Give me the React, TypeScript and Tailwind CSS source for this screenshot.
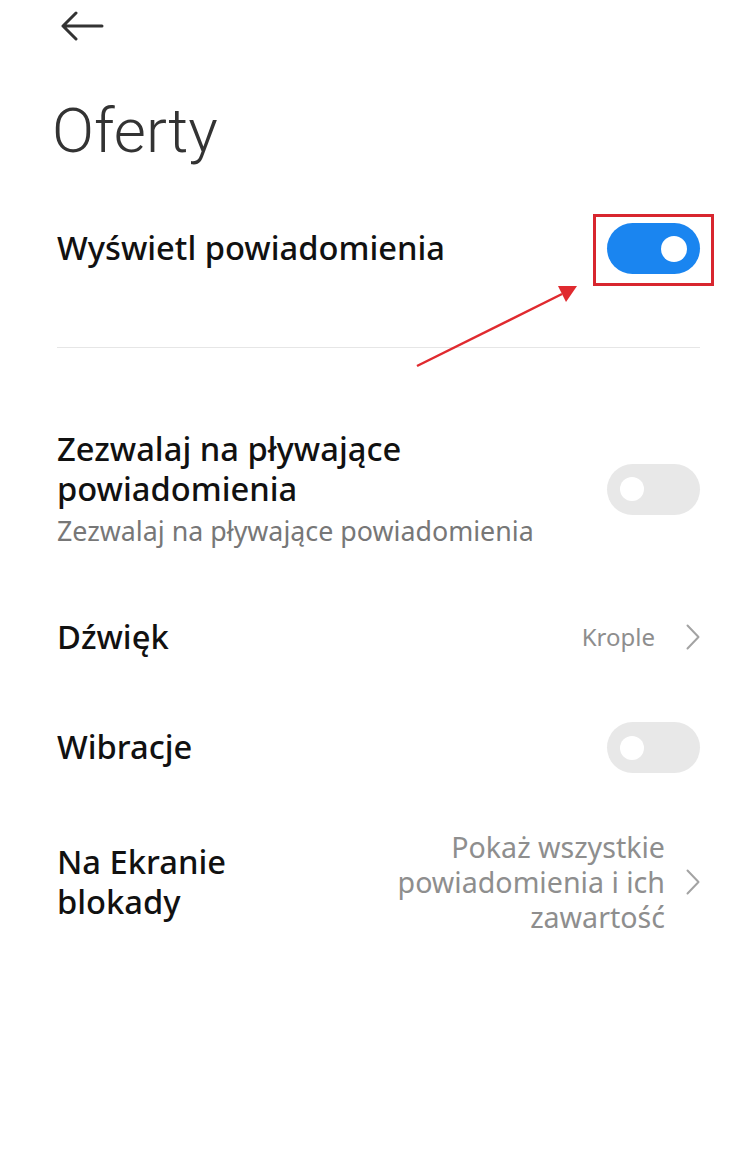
import React from "react";

const FONT = { fontFamily: "'Noto Sans', Roboto, sans-serif" };
const TITLE_FONT = { fontFamily: "Roboto, 'Noto Sans', sans-serif" };

function Toggle({ on }: { on?: boolean }) {
  return (
    <div
      className={`flex h-[51px] w-[93px] shrink-0 items-center rounded-full px-[13px] ${
        on ? "justify-end bg-[#1a85f0]" : "justify-start bg-[#e8e8e8]"
      }`}
    >
      <div className={`rounded-full bg-white ${on ? "h-[26px] w-[26px]" : "h-[24px] w-[24px]"}`} />
    </div>
  );
}

function Chevron() {
  return (
    <svg width="14" height="26" viewBox="0 0 14 26" className="shrink-0">
      <path d="M1.5 1.5 L12.5 13 L1.5 24.5" fill="none" stroke="#a3a3a3" strokeWidth="2" strokeLinecap="round" strokeLinejoin="round" />
    </svg>
  );
}

function Lines({ lines, className }: { lines: string[]; className: string }) {
  return (
    <div>
      {lines.map((l) => (
        <div key={l} className={className}>
          {l}
        </div>
      ))}
    </div>
  );
}

export default function App() {
  return (
    <div className="relative min-h-[1170px] w-[756px] bg-white text-[#111]" style={FONT}>
      <div className="flex h-[52px] items-center pl-[60px]">
        <svg width="44" height="30" viewBox="0 0 44 30">
          <path d="M42 15 H3 M16 2 L3 15 L16 28" fill="none" stroke="#333" strokeWidth="3" strokeLinecap="round" strokeLinejoin="round" />
        </svg>
      </div>

      <h1 className="mt-[48px] pl-[52px] text-[62px] font-light leading-none text-[#333]" style={TITLE_FONT}>
        Oferty
      </h1>

      <div className="px-[56px] pl-[57px]">
        <div className="mt-[61px] flex h-[51px] items-center justify-between">
          <span className="text-[32.7px] font-medium leading-none">Wyświetl powiadomienia</span>
          <div className="relative">
            <Toggle on />
            <div className="absolute -bottom-[12px] -left-[14px] -right-[14px] -top-[9px] border-[3px] border-[#d8262f]" />
          </div>
        </div>

        <div className="mt-[73px] h-px bg-[#e6e6e6]" />

        <div className="mt-[81px] flex items-center justify-between">
          <div>
            <Lines lines={["Zezwalaj na pływające", "powiadomienia"]} className="h-[40px] text-[32.7px] font-medium leading-[40px]" />
            <div className="mt-[4px] text-[26.8px] leading-[36px] text-[#777]">Zezwalaj na pływające powiadomienia</div>
          </div>
          <Toggle />
        </div>

        <div className="mt-[62px] flex h-[52px] items-center justify-between">
          <span className="text-[32.7px] font-medium leading-none">Dźwięk</span>
          <div className="flex items-center gap-[31px]">
            <span className="text-[24px] text-[#8e8e8e]">Krople</span>
            <Chevron />
          </div>
        </div>

        <div className="mt-[59px] flex items-center justify-between">
          <span className="text-[32.7px] font-medium leading-none">Wibracje</span>
          <Toggle />
        </div>

        <div className="mt-[56px] flex items-center justify-between">
          <Lines lines={["Na Ekranie", "blokady"]} className="h-[40px] text-[32.7px] font-medium leading-[40px]" />
          <div className="flex items-center gap-[21px]">
            <Lines
              lines={["Pokaż wszystkie", "powiadomienia i ich", "zawartość"]}
              className="h-[35px] text-right text-[28.6px] leading-[35px] text-[#8e8e8e]"
            />
            <Chevron />
          </div>
        </div>
      </div>

      <svg className="pointer-events-none absolute left-0 top-0" width="756" height="400" viewBox="0 0 756 400">
        <line x1="417" y1="366" x2="562" y2="294" stroke="#e02a2f" strokeWidth="2.5" />
        <polygon points="577,286 558,286 566,302" fill="#e02a2f" />
      </svg>
    </div>
  );
}
